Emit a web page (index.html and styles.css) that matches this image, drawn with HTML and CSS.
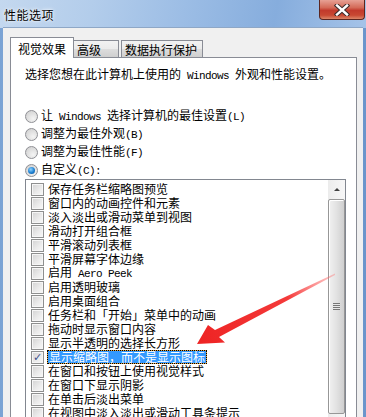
FILE: index.html
```html
<!DOCTYPE html>
<html lang="zh-CN">
<head>
    <meta charset="UTF-8">
    <meta name="viewport" content="width=device-width, initial-scale=1.0">
    <link rel="stylesheet" href="styles.css">
    <title>性能选项</title>
</head>
<body>
    <div class="window">
        <div class="titlebar">
            <span class="title">性能选项</span>
            <div class="close">
                <svg width="18" height="12" viewBox="0 0 18 12">
                    <path d="M4 1.5 L14 10.5 M14 1.5 L4 10.5" stroke="#3a2a2a" stroke-width="4.4" stroke-linecap="square"/>
                    <path d="M4 1.5 L14 10.5 M14 1.5 L4 10.5" stroke="#ffffff" stroke-width="2.4" stroke-linecap="square"/>
                </svg>
            </div>
        </div>

        <div class="client">
            <div class="tabs">
                <div class="tab active">视觉效果</div>
                <div class="tab second">高级</div>
                <div class="tab third">数据执行保护</div>
            </div>

            <div class="panel">
                <p class="intro">选择您想在此计算机上使用的<span class="en"> Windows </span>外观和性能设置。</p>

                <div class="options">
                    <div class="radio"><span class="circle"></span><span class="label">让<span class="en"> Windows </span>选择计算机的最佳设置<span class="en">(L)</span></span></div>
                    <div class="radio"><span class="circle"></span><span class="label">调整为最佳外观<span class="en">(B)</span></span></div>
                    <div class="radio"><span class="circle"></span><span class="label">调整为最佳性能<span class="en">(F)</span></span></div>
                    <div class="radio"><span class="circle on"></span><span class="label">自定义<span class="en">(C):</span></span></div>
                </div>

                <div class="listbox">
                    <ul class="items">
                        <li><span class="box"></span><span class="label">保存任务栏缩略图预览</span></li>
                        <li><span class="box"></span><span class="label">窗口内的动画控件和元素</span></li>
                        <li><span class="box"></span><span class="label">淡入淡出或滑动菜单到视图</span></li>
                        <li><span class="box"></span><span class="label">滑动打开组合框</span></li>
                        <li><span class="box"></span><span class="label">平滑滚动列表框</span></li>
                        <li><span class="box"></span><span class="label">平滑屏幕字体边缘</span></li>
                        <li><span class="box"></span><span class="label">启用<span class="en"> Aero Peek</span></span></li>
                        <li><span class="box"></span><span class="label">启用透明玻璃</span></li>
                        <li><span class="box"></span><span class="label">启用桌面组合</span></li>
                        <li><span class="box"></span><span class="label">任务栏和「开始」菜单中的动画</span></li>
                        <li><span class="box"></span><span class="label">拖动时显示窗口内容</span></li>
                        <li><span class="box"></span><span class="label">显示半透明的选择长方形</span></li>
                        <li><span class="box checked">✓</span><span class="label selected">显示缩略图，而不是显示图标</span></li>
                        <li><span class="box"></span><span class="label">在窗口和按钮上使用视觉样式</span></li>
                        <li><span class="box"></span><span class="label">在窗口下显示阴影</span></li>
                        <li><span class="box"></span><span class="label">在单击后淡出菜单</span></li>
                        <li><span class="box"></span><span class="label">在视图中淡入淡出或滑动工具条提示</span></li>
                    </ul>
                    <div class="scrollbar">
                        <div class="sb-up"><span class="tri"></span></div>
                        <div class="sb-thumb"><span class="grip"></span></div>
                    </div>
                </div>
            </div>
        </div>

        <svg class="arrow" width="366" height="417" viewBox="0 0 366 417">
            <defs>
                <linearGradient id="fade" x1="335" y1="274" x2="200" y2="342" gradientUnits="userSpaceOnUse">
                    <stop offset="0" stop-color="#ff6b6b" stop-opacity="0.35"/>
                    <stop offset="0.35" stop-color="#f43a3a"/>
                    <stop offset="1" stop-color="#ee2424"/>
                </linearGradient>
            </defs>
            <polygon fill="url(#fade)" points="335,273.5 215,330 208,325 197,344 225,342.5 219,337 335,275"/>
        </svg>
    </div>
</body>
</html>
```

FILE: styles.css
```css
body {
    margin: 0;
    font-family: "Noto Sans CJK SC", "Noto Sans", sans-serif;
    font-size: 12px;
    line-height: 14px;
    color: #000;
    background: #6f97c9;
}

.window {
    position: relative;
    width: 366px;
    height: 417px;
    overflow: hidden;
    display: flex;
    flex-direction: column;
    background: linear-gradient(to right, #7ba3d4, #9dbde3 30%, #86acdb 60%, #6b95cb);
}

/* ____________________________________________________________ */
.titlebar {
    height: 28px;
    flex-shrink: 0;
    display: flex;
    justify-content: space-between;
    align-items: flex-start;
    background: linear-gradient(100deg, #c4d8ef 0%, #b3cdeb 25%, #9cbde5 50%, #86addd 75%, #a5c3e8 100%);
}

.title {
    margin: 8px 0 0 4px;
    letter-spacing: 0.5px;
    text-shadow: 0 0 4px #ffffff, 0 0 2px #ffffff;
}

.close {
    width: 46px;
    height: 20px;
    margin-right: 1px;
    box-sizing: border-box;
    border: 1px solid #5b2620;
    border-top: none;
    border-radius: 0 0 4px 4px;
    background: linear-gradient(#e7a195 0%, #d46a58 40%, #c23a2c 55%, #c84832 80%, #dc8668 100%);
    display: flex;
    justify-content: center;
    align-items: center;
}

/* ____________________________________________________________ */
.client {
    flex: 1;
    margin: -1px 3px 0 3px;
    padding: 9px 6px 0 7px;
    background: #f0f0f0;
    border-top: 1px solid #8ea7c6;
    display: flex;
    flex-direction: column;
}

.tabs {
    display: flex;
    align-items: flex-end;
    height: 21px;
}

.tab {
    box-sizing: border-box;
    height: 17px;
    margin-bottom: 1px;
    border: 1px solid #898c95;
    border-bottom: none;
    background: linear-gradient(#f2f2f2, #ebebeb 50%, #dddddd 51%, #cfcfcf);
    padding: 2px 0 0 3px;
    white-space: nowrap;
}

.tab.active {
    position: relative;
    z-index: 1;
    width: 64px;
    height: 21px;
    margin-bottom: 0;
    margin-right: -1px;
    padding: 4px 0 0 7px;
    background: #ffffff;
}

.tab.second {
    width: 46px;
    margin-right: 2px;
}

.tab.third {
    width: 82px;
}

.panel {
    flex: 1;
    margin-top: -1px;
    border: 1px solid #898c95;
    background: #ffffff;
    padding: 0 10px 0 14px;
}

.intro {
    margin: 9px 0 0 0;
    white-space: nowrap;
}

.en {
    font-family: "Liberation Mono", "DejaVu Sans Mono", monospace;
    font-size: 11px;
    letter-spacing: -0.6px;
    white-space: pre;
}

.label {
    white-space: nowrap;
    line-height: 14px;
}

/* ____________________________________________________________ */
.options {
    margin-top: 24px;
}

.radio {
    height: 18px;
    display: flex;
    align-items: center;
}

.circle {
    box-sizing: border-box;
    width: 13px;
    height: 13px;
    margin-right: 3px;
    flex-shrink: 0;
    border-radius: 50%;
    border: 1px solid #8f9095;
    background: radial-gradient(circle at 65% 70%, #f4f4f4, #d8d8d8 70%, #c6c6c6);
    display: flex;
    justify-content: center;
    align-items: center;
}

.circle.on::after {
    content: "";
    width: 7px;
    height: 7px;
    border-radius: 50%;
    background: radial-gradient(circle at 40% 35%, #8fd3ff, #1c7fd0 55%, #0b4f96);
}

/* ____________________________________________________________ */
.listbox {
    width: 321px;
    height: 260px;
    box-sizing: border-box;
    border: 1px solid #828790;
    display: flex;
}

.items {
    flex: 1;
    list-style: none;
    margin: 0;
    padding: 2px 0 0 5px;
}

.items li {
    height: 14px;
    display: flex;
    align-items: center;
}

.box {
    box-sizing: border-box;
    width: 13px;
    height: 13px;
    margin-right: 4px;
    flex-shrink: 0;
    border: 1px solid #8e8f8f;
    box-shadow: inset 0 0 0 1px #f6f6f6;
    background: linear-gradient(135deg, #d2d2d2, #ececec 60%, #f8f8f8);
    font-size: 11px;
    line-height: 11px;
    text-align: center;
    color: #3d4f8c;
    font-family: "DejaVu Sans", sans-serif;
    font-weight: bold;
}

.selected {
    margin-left: -1px;
    height: 14px;
    box-sizing: border-box;
    padding: 0 1px;
    display: flex;
    align-items: center;
    border: 1px dotted #000;
    background: linear-gradient(#3399ff, #3399ff) padding-box, #e3a23c;
    color: #ffffff;
}

/* ____________________________________________________________ */
.scrollbar {
    width: 17px;
    padding-top: 1px;
    background: linear-gradient(to right, #ececec, #f7f7f7);
}

.sb-up {
    height: 17px;
    display: flex;
    justify-content: center;
    align-items: center;
}

.tri {
    width: 0;
    height: 0;
    border-left: 3px solid transparent;
    border-right: 3px solid transparent;
    border-bottom: 3px solid #404040;
}

.sb-thumb {
    height: 215px;
    margin-top: 1px;
    box-sizing: border-box;
    border: 1px solid #979797;
    border-radius: 2px;
    box-shadow: inset 1px 1px 0 #ffffff;
    background: linear-gradient(to right, #f1f1f1, #e2e2e2 50%, #cfcfcf);
    display: flex;
    justify-content: center;
    align-items: center;
}

.grip {
    width: 7px;
    height: 7px;
    background: repeating-linear-gradient(#777 0, #777 1px, #e8e8e8 1px, #e8e8e8 2px);
}

.arrow {
    position: absolute;
    left: 0;
    top: 0;
    pointer-events: none;
}
```
